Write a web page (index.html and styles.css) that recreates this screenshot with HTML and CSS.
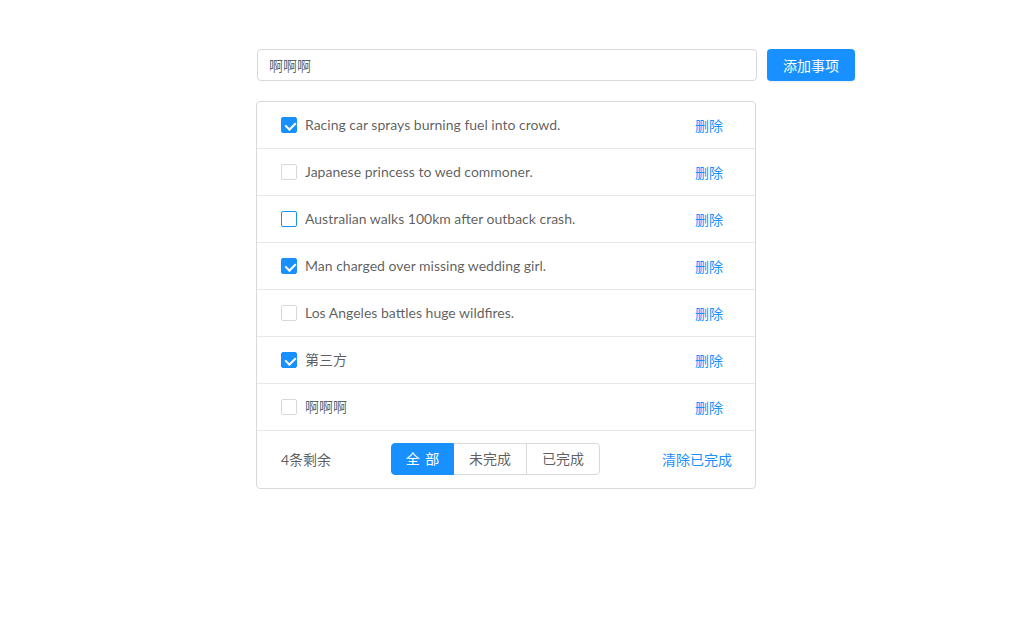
FILE: index.html
```html
<!DOCTYPE html>
<html lang="zh">
<head>
<meta charset="utf-8">
<link rel="stylesheet" href="styles.css">
</head>
<body>
<div class="app">
  <div class="add-bar">
    <input class="add-input" type="text" value="啊啊啊">
    <button class="btn-primary">添加事项</button>
  </div>
  <div class="list">
    <div class="item"><span class="cb checked"></span><span class="text">Racing car sprays burning fuel into crowd.</span><a class="del">删除</a></div>
    <div class="item"><span class="cb"></span><span class="text">Japanese princess to wed commoner.</span><a class="del">删除</a></div>
    <div class="item"><span class="cb hover"></span><span class="text">Australian walks 100km after outback crash.</span><a class="del">删除</a></div>
    <div class="item"><span class="cb checked"></span><span class="text">Man charged over missing wedding girl.</span><a class="del">删除</a></div>
    <div class="item"><span class="cb"></span><span class="text">Los Angeles battles huge wildfires.</span><a class="del">删除</a></div>
    <div class="item"><span class="cb checked"></span><span class="text">第三方</span><a class="del">删除</a></div>
    <div class="item"><span class="cb"></span><span class="text">啊啊啊</span><a class="del">删除</a></div>
    <div class="footer">
      <span class="count">4条剩余</span>
      <div class="seg">
        <span class="seg-btn active">全 部</span>
        <span class="seg-btn">未完成</span>
        <span class="seg-btn">已完成</span>
      </div>
      <a class="clear">清除已完成</a>
    </div>
  </div>
</div>
</body>
</html>
```

FILE: styles.css
```css
* { box-sizing: border-box; }
body {
  margin: 0;
  background: #fff;
  font-family: "Lato", "Noto Sans CJK SC", sans-serif;
  font-size: 14px;
  color: rgba(0,0,0,.65);
}
.app {
  padding: 49px 0 0 256px;
  width: 856px;
}
.add-bar {
  display: flex;
  gap: 10px;
  padding-left: 1px;
}
.add-input {
  width: 500px;
  height: 32px;
  border: 1px solid #d9d9d9;
  border-radius: 4px;
  padding: 0 11px;
  font: inherit;
  color: rgba(0,0,0,.65);
  outline: none;
}
.btn-primary {
  width: 88px;
  height: 32px;
  border: none;
  border-radius: 4px;
  background: #1890ff;
  color: #fff;
  font: inherit;
  font-size: 14px;
  box-shadow: 0 2px 0 rgba(0,0,0,.045);
}
.list {
  margin-top: 20px;
  width: 500px;
  border: 1px solid #d9d9d9;
  border-radius: 4px;
}
.item {
  height: 47px;
  display: flex;
  align-items: center;
  padding: 0 32px 0 24px;
  border-bottom: 1px solid #e8e8e8;
}
.cb {
  width: 16px;
  height: 16px;
  border: 1px solid #d9d9d9;
  border-radius: 2px;
  margin-right: 8px;
  position: relative;
  flex: none;
}
.cb.hover { border-color: #1890ff; }
.cb.checked { background: #1890ff; border-color: #1890ff; }
.cb.checked::after {
  content: "";
  position: absolute;
  left: 4.5px;
  top: 2px;
  width: 5px;
  height: 8px;
  border: 2px solid #fff;
  border-top: 0;
  border-left: 0;
  transform: rotate(45deg);
}
.text { flex: 1; line-height: 22px; }
.del { color: #1890ff; cursor: pointer; }
.footer {
  height: 57px;
  display: flex;
  align-items: center;
  padding: 0 23px 2px 24px;
}
.count { width: 110px; }
.seg {
  display: flex;
  height: 32px;
}
.seg-btn {
  height: 32px;
  line-height: 30px;
  border: 1px solid #d9d9d9;
  margin-left: -1px;
  padding: 0 15px;
  color: rgba(0,0,0,.65);
  background: #fff;
  white-space: nowrap;
}
.seg-btn:first-child { border-radius: 4px 0 0 4px; margin-left: 0; width: 63px; padding: 0; text-align: center; word-spacing: 2px; }
.seg-btn:last-child { border-radius: 0 4px 4px 0; }
.seg-btn.active { background: #1890ff; border-color: #1890ff; color: #fff; position: relative; }
.clear { margin-left: auto; color: #1890ff; cursor: pointer; }
```
